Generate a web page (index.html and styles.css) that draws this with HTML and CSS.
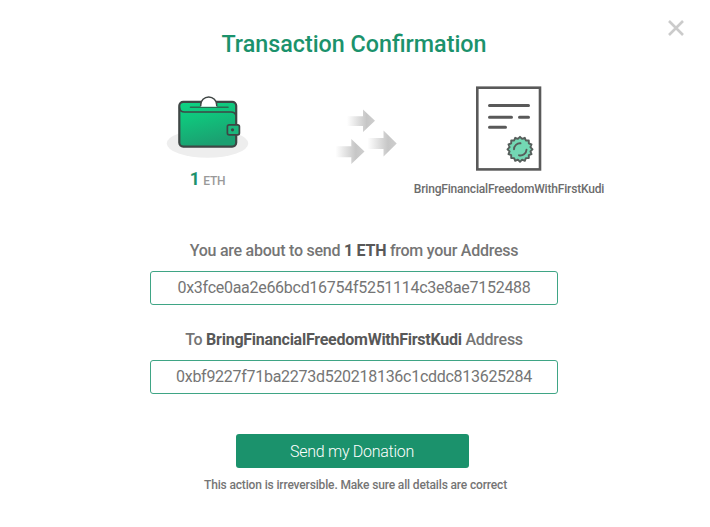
FILE: index.html
```
<!DOCTYPE html>
<html lang="en">
<head>
    <meta charset="UTF-8">
    <meta name="viewport" content="width=device-width, initial-scale=1.0">
    <title>Transaction Confirmation</title>
    <link rel="stylesheet" href="styles.css">
</head>
<body>
    <div class="modal">
        <button class="close" type="button" aria-label="Close">
            <svg width="16" height="16" viewBox="0 0 16 16">
                <path d="M1 1L15 15M15 1L1 15" stroke="#cbcbcb" stroke-width="2.6"/>
            </svg>
        </button>

        <h1>Transaction Confirmation</h1>

        <div class="transfer">
            <div class="from">
                <!-- Wallet -->
                <svg class="wallet" width="84" height="66" viewBox="166 94 84 66">
                    <defs>
                        <linearGradient id="leather" x1="0" y1="0" x2="0.3" y2="1">
                            <stop offset="0" stop-color="#0bd584"/>
                            <stop offset="0.4" stop-color="#10c47c"/>
                            <stop offset="1" stop-color="#1ba071"/>
                        </linearGradient>
                    </defs>
                    <ellipse cx="207.5" cy="143.5" rx="40.7" ry="14.3" fill="#eeeeee"/>
                    <rect x="179.3" y="101.8" width="56.9" height="44.8" rx="4" fill="url(#leather)" stroke="#3f4645" stroke-width="2.2"/>
                    <path d="M179.5 107.5Q179.8 112 184.5 112H231Q235 112 236 115.5" fill="none" stroke="#3f4645" stroke-width="1.6"/>
                    <path d="M190.5 107.3H228" stroke="#2a6a50" stroke-width="1.6" stroke-linecap="round"/>
                    <path d="M200.7 106.8V105A8 8 0 0 1 216.7 105V106.8Z" fill="#fff"/>
                    <path d="M200.7 106.3V105A8 8 0 0 1 216.7 105V106.3" fill="none" stroke="#3f4645" stroke-width="1.5"/>
                    <rect x="227.4" y="124.8" width="12" height="10" rx="1.8" fill="#1bb67c" stroke="#3f4645" stroke-width="1.7"/>
                    <circle cx="232.5" cy="129.8" r="1.6" fill="#3f4645"/>
                </svg>
                <p class="amount"><span class="value">1</span> ETH</p>
            </div>

            <!-- Arrows -->
            <svg class="arrows" width="64" height="58" viewBox="335 108 64 58">
                <defs>
                    <linearGradient id="fade">
                        <stop offset="0" stop-color="#c6c6c6" stop-opacity="0"/>
                        <stop offset="0.7" stop-color="#c6c6c6"/>
                        <stop offset="1" stop-color="#cecece"/>
                    </linearGradient>
                </defs>
                <path d="M347 116.3H363V109.5L375 120.8L363 132V126H347Z" fill="url(#fade)"/>
                <path d="M367.5 138H383.5V130.5L396.7 143.5L383.5 156.5V149H367.5Z" fill="url(#fade)"/>
                <path d="M335.5 146.3H351.3V139L364.5 151.5L351.3 164V157.3H335.5Z" fill="url(#fade)"/>
            </svg>

            <div class="to">
                <!-- Contract with seal -->
                <svg class="contract" width="66" height="86" viewBox="476 86 66 86">
                    <rect x="477.3" y="87.7" width="62.7" height="81.7" fill="#fff" stroke="#595959" stroke-width="2.6"/>
                    <path d="M489.5 105.5H528.5M489.5 117.2H511.5M519.5 117.2H528.5M489.5 127.2H505.5" stroke="#595959" stroke-width="3" stroke-linecap="round"/>
                    <g transform="translate(520 149.3)" stroke="#565e5b" stroke-width="1.9" stroke-linecap="round" stroke-linejoin="round">
                        <path d="M12.5 0L10.4 2.1 11.5 4.8 8.8 5.9 8.8 8.8 5.9 8.8 4.8 11.5 2.1 10.4 0 12.5 -2.1 10.4 -4.8 11.5 -5.9 8.8 -8.8 8.8 -8.8 5.9 -11.5 4.8 -10.4 2.1 -12.5 0 -10.4 -2.1 -11.5 -4.8 -8.8 -5.9 -8.8 -8.8 -5.9 -8.8 -4.8 -11.5 -2.1 -10.4 0 -12.5 2.1 -10.4 4.8 -11.5 5.9 -8.8 8.8 -8.8 8.8 -5.9 11.5 -4.8 10.4 -2.1Z" fill="#73d8b4"/>
                        <path d="M-6 0A6 6 0 0 1 0.5 -6M6.5 0.5A6 6 0 0 1 -1 6" fill="none"/>
                    </g>
                </svg>
                <p class="campaign">BringFinancialFreedomWithFirstKudi</p>
            </div>
        </div>

        <p class="label">You are about to send <strong>1 ETH</strong> from your Address</p>
        <div class="address">0x3fce0aa2e66bcd16754f5251114c3e8ae7152488</div>

        <p class="label">To <strong>BringFinancialFreedomWithFirstKudi</strong> Address</p>
        <div class="address">0xbf9227f71ba2273d520218136c1cddc813625284</div>

        <button class="send" type="button">Send my Donation</button>
        <p class="note">This action is irreversible. Make sure all details are correct</p>
    </div>
</body>
</html>
```

FILE: styles.css
```
* {
    box-sizing: border-box;
}

body {
    font-family: Roboto, sans-serif;
    background-color: #fff;
    color: #757575;
    margin: 0;
}

h1, p {
    margin: 0;
}

.modal {
    position: relative;
    display: flex;
    flex-direction: column;
    align-items: center;
    width: 708px;
    height: 527px;
    padding-top: 30px;
}

.close {
    position: absolute;
    top: 20px;
    right: 24px;
    width: 16px;
    height: 16px;
    padding: 0;
    border: none;
    background: none;
    cursor: pointer;
}

.close svg {
    display: block;
}

h1 {
    color: #1b926c;
    font-size: 23.3px;
    font-weight: 500;
    line-height: 28px;
}

.transfer {
    display: flex;
    align-items: flex-start;
    width: 408px;
    height: 154px;
    padding-top: 28px;
}

.from {
    width: 115px;
    flex: none;
    padding-top: 8px;
    text-align: center;
}

.wallet, .contract {
    display: block;
    margin: 0 auto;
}

.amount {
    margin-top: 7px;
    color: #999;
    font-size: 12px;
    font-weight: 500;
    letter-spacing: -0.2px;
    line-height: 24px;
}

.value {
    margin-right: 1px;
    color: #1b926c;
    font-size: 17.5px;
    font-weight: 700;
}

.arrows {
    flex: none;
    margin: 22px 10px 0 70px;
}

.to {
    width: 200px;
    flex: none;
    text-align: center;
}

.campaign {
    margin-top: 9px;
    font-size: 12px;
    font-weight: 500;
    letter-spacing: -0.18px;
    line-height: 16px;
    color: #6c6c6c;
}

.label {
    margin-top: 29px;
    font-size: 16px;
    font-weight: 500;
    letter-spacing: -0.25px;
    line-height: 20px;
}

.label strong {
    color: #585858;
    font-weight: 700;
}

.address {
    width: 408px;
    height: 34px;
    margin-top: 10px;
    border: 1px solid #3fa585;
    border-radius: 3px;
    font-size: 16px;
    letter-spacing: -0.28px;
    line-height: 32px;
    text-align: center;
}

.address + .label {
    margin-top: 25px;
}

.send {
    width: 233px;
    height: 34px;
    margin: 40px 4px 0 0;
    padding: 0;
    border: none;
    border-radius: 3px;
    background-color: #1b926c;
    color: #fff;
    font-family: inherit;
    font-size: 16px;
    font-weight: 300;
    letter-spacing: -0.28px;
    cursor: pointer;
}

.note {
    margin-top: 9px;
    margin-left: 3px;
    font-size: 12px;
    font-weight: 500;
    letter-spacing: -0.15px;
    line-height: 16px;
}
```
